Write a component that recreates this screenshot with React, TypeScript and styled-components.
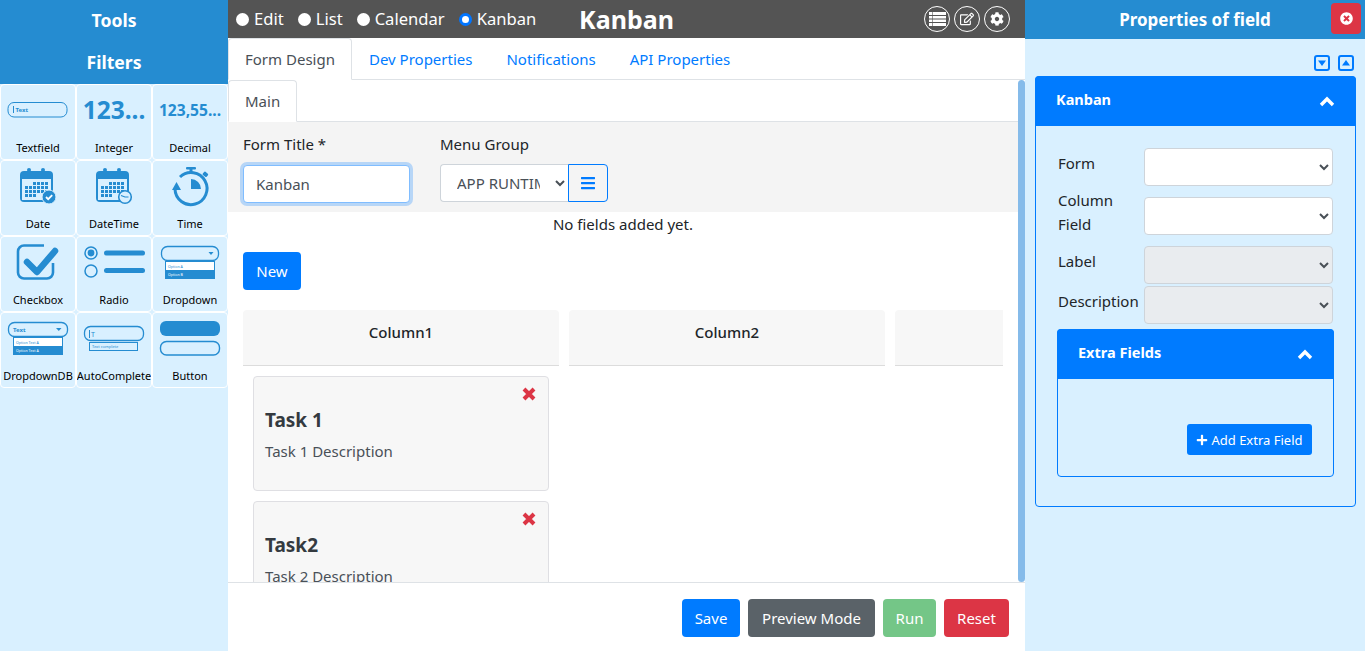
import React from 'react';
import styled, {createGlobalStyle} from 'styled-components';
import {FaBars, FaCog, FaPlus, FaRegEdit, FaTimesCircle} from 'react-icons/fa';

const BLUE = '#258cd1';
const PALE = '#d9f0ff';

const GlobalStyle = createGlobalStyle`
  html, body {
    margin: 0;
    padding: 0;
    height: 100%;
    overflow: hidden;
  }
  * {
    box-sizing: border-box;
  }
  body {
    font-family: "Noto Sans", "Open Sans", sans-serif;
    font-size: 15px;
    line-height: 24px;
    color: #212529;
    background: #fff;
  }
`;

const Page = styled.div`
  display: flex;
  width: 1365px;
  height: 651px;
  overflow: hidden;
`;

/* left tools */
const Sidebar = styled.aside`
  width: 228px;
  flex-shrink: 0;
  background: ${PALE};
`;

const SideTitle = styled.div`
  height: 42px;
  background: ${BLUE};
  color: #fff;
  font-size: 17.6px;
  font-weight: 700;
  line-height: 41px;
  text-align: center;
`;

const ToolGrid = styled.div`
  display: grid;
  grid-template-columns: repeat(3, 76px);
  grid-auto-rows: 76px;
`;

const Tool = styled.div`
  position: relative;
  display: flex;
  flex-direction: column;
  align-items: center;
  overflow: hidden;
  border: 1px solid #fff;
  border-radius: 4px;
  background: ${PALE};
`;

const ToolArt = styled.svg`
  display: block;
  width: 76px;
  height: 54px;
  margin: -1px;
  flex-shrink: 0;
  overflow: visible;
`;

const ToolLabel = styled.div`
  margin-top: 1px;
  font-size: 11px;
  line-height: 20px;
  color: #000;
  white-space: nowrap;
`;

const NumberArt = styled.div<{$size: number}>`
  height: 52px;
  padding-top: 10px;
  font-size: ${(p) => p.$size}px;
  line-height: 30px;
  font-weight: 700;
  color: ${BLUE};
  white-space: nowrap;
`;

const SvgText = styled.text<{$size: number; $bold?: boolean; $fill?: string}>`
  font-size: ${(p) => p.$size}px;
  font-weight: ${(p) => (p.$bold ? 700 : 400)};
  fill: ${(p) => p.$fill || BLUE};
`;

const CalendarBase = () => {
  const cells: React.ReactNode[] = [];
  [22, 26, 30, 34].forEach((y, row) => {
    for (let i = 0; i < 6; i++) {
      if ((row === 0 && i < 2) || (row === 3 && i > 2)) continue;
      cells.push(<rect key={`${row}-${i}`} x={25 + i * 4} y={y} width={3} height={3} fill={BLUE} />);
    }
  });
  return (
    <>
      <circle cx="29" cy="10" r="2" fill={BLUE} />
      <circle cx="43" cy="10" r="2" fill={BLUE} />
      <rect x="20" y="11" width="33" height="31" rx="4" fill={BLUE} />
      <rect x="22" y="19" width="29" height="21" fill={PALE} />
      {cells}
    </>
  );
};

const DateArt = () => (
  <ToolArt viewBox="0 0 76 54">
    <CalendarBase />
    <circle cx="49" cy="37" r="7" fill={BLUE} stroke={PALE} strokeWidth="1" />
    <path d="M46 37l2.2 2.2 4-4" fill="none" stroke="#fff" strokeWidth="1.8" />
  </ToolArt>
);

const DateTimeArt = () => (
  <ToolArt viewBox="0 0 76 54">
    <CalendarBase />
    <circle cx="49" cy="37" r="6.3" fill={PALE} stroke={BLUE} strokeWidth="1.6" />
    <path d="M45 35.5l4 1.5h3.5" fill="none" stroke={BLUE} strokeWidth="1.2" />
  </ToolArt>
);

const TimeArt = () => (
  <ToolArt viewBox="0 0 76 54">
    <rect x="34" y="7" width="10" height="2.4" rx="1" fill={BLUE} />
    <rect x="37.5" y="8" width="3" height="5" fill={BLUE} />
    <rect x="51" y="12" width="5" height="4" rx="1" transform="rotate(40 53 14)" fill={BLUE} />
    <path d="M28 17A16 16 0 1 1 23 29" fill="none" stroke={BLUE} strokeWidth="3" />
    <path d="M20 30h9l-4.5-8z" fill={BLUE} />
    <path d="M39 19v10h10a10 10 0 0 0-10-10z" fill={BLUE} />
  </ToolArt>
);

const CheckboxArt = () => (
  <ToolArt viewBox="0 0 76 54">
    <path
      d="M44 9.5H24a6 6 0 0 0-6 6v21a6 6 0 0 0 6 6h23a6 6 0 0 0 6-6V27"
      fill="none"
      stroke={BLUE}
      strokeWidth="2.6"
    />
    <path d="M27 26l10 10 18-21" fill="none" stroke={BLUE} strokeWidth="6.5" strokeLinecap="round" strokeLinejoin="round" />
  </ToolArt>
);

const RadioArt = () => (
  <ToolArt viewBox="0 0 76 54">
    <circle cx="15" cy="17" r="6" fill="none" stroke={BLUE} strokeWidth="1.5" />
    <circle cx="15" cy="17" r="3.4" fill={BLUE} />
    <circle cx="15" cy="35" r="6" fill="none" stroke={BLUE} strokeWidth="1.5" />
    <rect x="28" y="14.5" width="41" height="5" rx="2.5" fill={BLUE} />
    <rect x="28" y="32" width="41" height="5" rx="2.5" fill={BLUE} />
  </ToolArt>
);

const DropdownArt = () => (
  <ToolArt viewBox="0 0 76 54">
    <rect x="9.5" y="10.5" width="57" height="14" rx="6" fill="none" stroke={BLUE} strokeWidth="1.3" />
    <path d="M56.5 16h5l-2.5 3z" fill={BLUE} />
    <rect x="13.5" y="25.5" width="49" height="17" fill="#fff" stroke={BLUE} />
    <rect x="13" y="34" width="50" height="9" fill={BLUE} />
    <SvgText $size={3.6} x="16" y="31.5">Option A</SvgText>
    <SvgText $size={3.6} $fill="#fff" x="16" y="40">Option B</SvgText>
  </ToolArt>
);

const DropdownDbArt = () => (
  <ToolArt viewBox="0 0 76 54">
    <rect x="8.5" y="10.5" width="59" height="14" rx="6" fill="none" stroke={BLUE} strokeWidth="1.3" />
    <SvgText $size={6} $bold x="13" y="19.5">Text</SvgText>
    <path d="M56 16h5.5l-2.7 3z" fill={BLUE} />
    <rect x="13.5" y="25.5" width="49" height="17" fill="#fff" stroke={BLUE} />
    <rect x="13" y="34" width="50" height="9" fill={BLUE} />
    <SvgText $size={3.6} x="16" y="31.5">Option Text A</SvgText>
    <SvgText $size={3.6} $fill="#fff" x="16" y="40">Option Text A</SvgText>
  </ToolArt>
);

const AutoCompleteArt = () => (
  <ToolArt viewBox="0 0 76 54">
    <rect x="8.5" y="14.5" width="59" height="14" rx="6" fill="none" stroke={BLUE} strokeWidth="1.3" />
    <rect x="13" y="18" width="1" height="8" fill={BLUE} />
    <SvgText $size={7} x="15" y="24.5">T</SvgText>
    <rect x="13.5" y="30.5" width="48" height="8" fill="none" stroke={BLUE} />
    <SvgText $size={4} x="16" y="36">Text complete</SvgText>
  </ToolArt>
);

const TextfieldArt = () => (
  <ToolArt viewBox="0 0 76 54">
    <rect x="8" y="18.5" width="59" height="14.5" rx="6" fill="none" stroke={BLUE} />
    <rect x="13" y="22" width="1" height="7" fill={BLUE} />
    <SvgText $size={6} $bold x="15.5" y="27.8">Text</SvgText>
  </ToolArt>
);

const ButtonArt = () => (
  <ToolArt viewBox="0 0 76 54">
    <rect x="8" y="9" width="60" height="15" rx="6" fill={BLUE} />
    <rect x="8.5" y="29.5" width="59" height="13.5" rx="6" fill="none" stroke={BLUE} strokeWidth="1.4" />
  </ToolArt>
);

/* small hand drawn glyphs */
const TableIcon = () => (
  <svg width="17" height="14" viewBox="0 0 17 14">
    <rect width="17" height="14" fill="#fff" />
    <path d="M0 3.5h17M0 7h17M0 10.5h17" stroke="#545454" strokeWidth="1" />
    <path d="M3.5 0v14" stroke="#545454" strokeWidth="0.6" />
  </svg>
);

const ChevronUp = styled.svg`
  width: 16px;
  height: 11px;
  margin-top: 5px;
  flex-shrink: 0;
`;

const Chevron = () => (
  <ChevronUp viewBox="0 0 16 11">
    <path d="M2 9l6-6 6 6" fill="none" stroke="#fff" strokeWidth="3.4" />
  </ChevronUp>
);

const CaretBox = ({up}: {up?: boolean}) => (
  <svg width="16" height="16" viewBox="0 0 16 16">
    <rect x="1" y="1" width="14" height="14" rx="2" fill="none" stroke="#007bff" strokeWidth="2" />
    <path d={up ? 'M4 10.5h8L8 5z' : 'M4 5.5h8L8 11z'} fill="#007bff" />
  </svg>
);

const CrossIcon = () => (
  <svg width="14" height="14" viewBox="0 0 14 14">
    <path d="M2 2l10 10M12 2L2 12" stroke="#dc3545" strokeWidth="4" />
  </svg>
);

/* main column */
const Main = styled.main`
  width: 797px;
  flex-shrink: 0;
  display: flex;
  flex-direction: column;
  background: #fff;
`;

const TopBar = styled.header`
  height: 38px;
  flex-shrink: 0;
  display: grid;
  grid-template-columns: 1fr auto 1fr;
  align-items: center;
  padding: 0 8px;
  background: #545454;
  color: #fff;
`;

const ModeGroup = styled.div`
  display: flex;
  gap: 14px;
`;

const Mode = styled.label`
  display: flex;
  align-items: center;
  gap: 5px;
  font-size: 16.6px;
  color: #fff;
`;

const ModeDot = styled.span<{$on?: boolean}>`
  width: 13px;
  height: 13px;
  border-radius: 50%;
  background: #fff;
  border: ${(p) => (p.$on ? '3px solid #0075ff' : 'none')};
`;

const BarTitle = styled.div`
  font-size: 25px;
  font-weight: 700;
  line-height: 38px;
`;

const RoundIcons = styled.div`
  justify-self: end;
  display: flex;
  gap: 4px;
  margin-right: 7px;
`;

const RoundIcon = styled.span`
  width: 26px;
  height: 26px;
  display: flex;
  align-items: center;
  justify-content: center;
  border: 1px solid #fff;
  border-radius: 50%;
  color: #fff;
  font-size: 14px;
`;

const TabRow = styled.nav<{$height: number}>`
  height: ${(p) => p.$height}px;
  flex-shrink: 0;
  display: flex;
  border-bottom: 1px solid #dee2e6;
  background: #fff;
`;

const TabItem = styled.div<{$active?: boolean}>`
  height: calc(100% + 1px);
  padding: 0 16px;
  line-height: 40px;
  white-space: nowrap;
  color: ${(p) => (p.$active ? '#495057' : '#007bff')};
  background: ${(p) => (p.$active ? '#fff' : 'transparent')};
  border: 1px solid ${(p) => (p.$active ? '#dee2e6' : 'transparent')};
  border-bottom-color: ${(p) => (p.$active ? '#fff' : 'transparent')};
  border-radius: 4px 4px 0 0;
`;

const Workspace = styled.div`
  flex: 1;
  min-height: 0;
  display: flex;
`;

const ScrollBody = styled.div`
  flex: 1;
  min-width: 0;
  display: flex;
  flex-direction: column;
  overflow: hidden;
`;

const ScrollThumb = styled.div`
  width: 7px;
  flex-shrink: 0;
  border-radius: 4px;
  background: #85bbea;
`;

const FormPanel = styled.div`
  height: 90px;
  flex-shrink: 0;
  display: flex;
  gap: 30px;
  padding: 10px 15px 0;
  background: #f4f4f4;
`;

const Field = styled.div`
  display: flex;
  flex-direction: column;
  gap: 8px;
`;

const FieldLabel = styled.label`
  line-height: 24px;
  color: #212529;
`;

const TitleInput = styled.input`
  width: 167px;
  height: 38px;
  margin-top: 1px;
  padding: 0 12px;
  font: inherit;
  color: #495057;
  background: #fff;
  border: 1px solid #80bdff;
  border-radius: 4px;
  box-shadow: 0 0 0 3px rgba(0, 123, 255, 0.25);
  outline: none;
`;

const InputGroup = styled.div`
  display: flex;
`;

const MenuSelect = styled.select`
  width: 128px;
  height: 38px;
  padding: 0 12px;
  font: inherit;
  color: #495057;
  background: #fff;
  border: 1px solid #ced4da;
  border-right: none;
  border-radius: 4px 0 0 4px;
  outline: none;
`;

const MenuButton = styled.button`
  width: 40px;
  height: 38px;
  display: flex;
  align-items: center;
  justify-content: center;
  padding: 0;
  color: #007bff;
  font-size: 16px;
  background: transparent;
  border: 1px solid #007bff;
  border-radius: 0 4px 4px 0;
`;

const EmptyNote = styled.div`
  flex-shrink: 0;
  height: 24px;
  text-align: center;
`;

const NewRow = styled.div`
  flex-shrink: 0;
  padding: 16px 15px 20px;
`;

const Button = styled.button<{$bg: string; $width: number}>`
  width: ${(p) => p.$width}px;
  height: 38px;
  padding: 0;
  font: inherit;
  color: #fff;
  background: ${(p) => p.$bg};
  border: none;
  border-radius: 4px;
  white-space: nowrap;
`;

const Board = styled.div`
  flex: 1;
  min-height: 0;
  margin: 0 15px;
  display: flex;
  gap: 10px;
  overflow: hidden;
`;

const Column = styled.section`
  width: 316px;
  flex-shrink: 0;
`;

const ColumnHead = styled.div`
  height: 56px;
  padding-top: 10px;
  text-align: center;
  font-weight: 500;
  background: #f7f7f7;
  border-bottom: 1px solid #dcdcdc;
  border-radius: 4px 4px 0 0;
`;

const Card = styled.article`
  position: relative;
  height: 115px;
  margin: 10px 10px 0;
  padding: 31px 11px 0;
  background: #f7f7f7;
  border: 1px solid #dfdfe3;
  border-radius: 4px;
`;

const CardClose = styled.span`
  position: absolute;
  top: 10px;
  right: 12px;
  display: flex;
`;

const CardTitle = styled.h5`
  margin: 0 0 7px;
  font-size: 19px;
  line-height: 24px;
  font-weight: 700;
  color: #343a40;
`;

const CardText = styled.p`
  margin: 0;
  color: #495057;
`;

const Footer = styled.footer`
  height: 69px;
  flex-shrink: 0;
  display: flex;
  justify-content: flex-end;
  gap: 8px;
  padding: 16px 16px 0 0;
  border-top: 1px solid #dee2e6;
`;

/* right properties panel */
const Props = styled.aside`
  width: 340px;
  flex-shrink: 0;
  background: ${PALE};
`;

const PropsHead = styled.div`
  position: relative;
  height: 39px;
  background: ${BLUE};
  color: #fff;
  font-size: 17px;
  font-weight: 700;
  line-height: 40px;
  text-align: center;
`;

const CloseButton = styled.span`
  position: absolute;
  top: 3px;
  right: 4px;
  width: 30px;
  height: 31px;
  display: flex;
  align-items: center;
  justify-content: center;
  color: #fff;
  font-size: 13px;
  background: #dc3545;
  border-radius: 4px;
`;

const ExpandRow = styled.div`
  height: 37px;
  display: flex;
  justify-content: flex-end;
  gap: 8px;
  padding: 16px 11px 0 0;
`;

const Accordion = styled.section`
  margin: 0 9px 0 10px;
  height: 431px;
  border: 1px solid #007bff;
  border-radius: 4px;
`;

const AccordionHead = styled.div`
  height: 50px;
  margin: -1px -1px 0;
  display: flex;
  align-items: center;
  justify-content: space-between;
  padding: 0 21px 4px 21px;
  background: #007bff;
  color: #fff;
  font-weight: 700;
  font-size: 14.5px;
  border-radius: 4px 4px 0 0;
`;

const AccordionBody = styled.div`
  padding: 22px 22px 0 21px;
`;

const PropRow = styled.div<{$after?: number}>`
  display: grid;
  grid-template-columns: 87px 189px;
  margin-bottom: ${(p) => p.$after || 0}px;
`;

const PropLabel = styled.label`
  padding: 3px 0 0 1px;
  white-space: nowrap;
  color: #212529;
`;

const WrapLabel = styled(PropLabel)`
  padding-top: 2px;
  white-space: normal;
  line-height: 24px;
`;

const PropSelect = styled.select<{$top?: number}>`
  width: 189px;
  height: 38px;
  margin-top: ${(p) => p.$top || 0}px;
  padding: 0 12px;
  font: inherit;
  color: #495057;
  background: ${(p) => (p.disabled ? '#e9ecef' : '#fff')};
  border: 1px solid #ced4da;
  border-radius: 4px;
  opacity: 1;
  outline: none;
`;

const ExtraPanel = styled.div`
  width: 277px;
  height: 148px;
  border: 1px solid #007bff;
  border-radius: 4px;
`;

const ExtraBody = styled.div`
  display: flex;
  justify-content: flex-end;
  padding: 45px 21px 0 0;
`;

const AddButton = styled.button`
  width: 125px;
  height: 31px;
  display: flex;
  align-items: center;
  justify-content: center;
  gap: 3px;
  padding: 0;
  font: inherit;
  font-size: 13px;
  color: #fff;
  background: #007bff;
  border: none;
  border-radius: 3px;
  white-space: nowrap;
`;

const tools = [
  {label: 'Textfield', art: <TextfieldArt />},
  {label: 'Integer', art: <NumberArt $size={24.5}>123...</NumberArt>},
  {label: 'Decimal', art: <NumberArt $size={15.6}>123,55...</NumberArt>},
  {label: 'Date', art: <DateArt />},
  {label: 'DateTime', art: <DateTimeArt />},
  {label: 'Time', art: <TimeArt />},
  {label: 'Checkbox', art: <CheckboxArt />},
  {label: 'Radio', art: <RadioArt />},
  {label: 'Dropdown', art: <DropdownArt />},
  {label: 'DropdownDB', art: <DropdownDbArt />},
  {label: 'AutoComplete', art: <AutoCompleteArt />},
  {label: 'Button', art: <ButtonArt />},
];

const tasks = [
  {title: 'Task 1', text: 'Task 1 Description'},
  {title: 'Task2', text: 'Task 2 Description'},
];

export default function App() {
  return (
    <Page>
      <GlobalStyle />
      <Sidebar>
        <SideTitle>Tools</SideTitle>
        <SideTitle>Filters</SideTitle>
        <ToolGrid>
          {tools.map((t) => (
            <Tool key={t.label}>
              {t.art}
              <ToolLabel>{t.label}</ToolLabel>
            </Tool>
          ))}
        </ToolGrid>
      </Sidebar>

      <Main>
        <TopBar>
          <ModeGroup>
            <Mode><ModeDot />Edit</Mode>
            <Mode><ModeDot />List</Mode>
            <Mode><ModeDot />Calendar</Mode>
            <Mode><ModeDot $on />Kanban</Mode>
          </ModeGroup>
          <BarTitle>Kanban</BarTitle>
          <RoundIcons>
            <RoundIcon><TableIcon /></RoundIcon>
            <RoundIcon><FaRegEdit /></RoundIcon>
            <RoundIcon><FaCog /></RoundIcon>
          </RoundIcons>
        </TopBar>
        <TabRow $height={42}>
          <TabItem $active>Form Design</TabItem>
          <TabItem>Dev Properties</TabItem>
          <TabItem>Notifications</TabItem>
          <TabItem>API Properties</TabItem>
        </TabRow>
        <Workspace>
          <ScrollBody>
            <TabRow $height={42}>
              <TabItem $active>Main</TabItem>
            </TabRow>
            <FormPanel>
              <Field>
                <FieldLabel>Form Title *</FieldLabel>
                <TitleInput defaultValue="Kanban" />
              </Field>
              <Field>
                <FieldLabel>Menu Group</FieldLabel>
                <InputGroup>
                  <MenuSelect defaultValue="APP RUNTIME">
                    <option>APP RUNTIME</option>
                  </MenuSelect>
                  <MenuButton><FaBars /></MenuButton>
                </InputGroup>
              </Field>
            </FormPanel>
            <EmptyNote>No fields added yet.</EmptyNote>
            <NewRow>
              <Button $bg="#007bff" $width={58}>New</Button>
            </NewRow>
            <Board>
              <Column>
                <ColumnHead>Column1</ColumnHead>
                {tasks.map((t) => (
                  <Card key={t.title}>
                    <CardClose><CrossIcon /></CardClose>
                    <CardTitle>{t.title}</CardTitle>
                    <CardText>{t.text}</CardText>
                  </Card>
                ))}
              </Column>
              <Column>
                <ColumnHead>Column2</ColumnHead>
              </Column>
              <Column>
                <ColumnHead />
              </Column>
            </Board>
          </ScrollBody>
          <ScrollThumb />
        </Workspace>
        <Footer>
          <Button $bg="#007bff" $width={58}>Save</Button>
          <Button $bg="#5a6268" $width={127}>Preview Mode</Button>
          <Button $bg="#74c687" $width={53}>Run</Button>
          <Button $bg="#dc3545" $width={65}>Reset</Button>
        </Footer>
      </Main>

      <Props>
        <PropsHead>
          Properties of field
          <CloseButton><FaTimesCircle /></CloseButton>
        </PropsHead>
        <ExpandRow>
          <CaretBox />
          <CaretBox up />
        </ExpandRow>
        <Accordion>
          <AccordionHead>
            Kanban
            <Chevron />
          </AccordionHead>
          <AccordionBody>
            <PropRow>
              <PropLabel>Form</PropLabel>
              <PropSelect />
            </PropRow>
            <PropRow $after={10}>
              <WrapLabel>Column Field</WrapLabel>
              <PropSelect $top={11} />
            </PropRow>
            <PropRow $after={2}>
              <PropLabel>Label</PropLabel>
              <PropSelect disabled />
            </PropRow>
            <PropRow $after={5}>
              <PropLabel>Description</PropLabel>
              <PropSelect disabled />
            </PropRow>
            <ExtraPanel>
              <AccordionHead>
                Extra Fields
                <Chevron />
              </AccordionHead>
              <ExtraBody>
                <AddButton><FaPlus size={12} /> Add Extra Field</AddButton>
              </ExtraBody>
            </ExtraPanel>
          </AccordionBody>
        </Accordion>
      </Props>
    </Page>
  );
}
